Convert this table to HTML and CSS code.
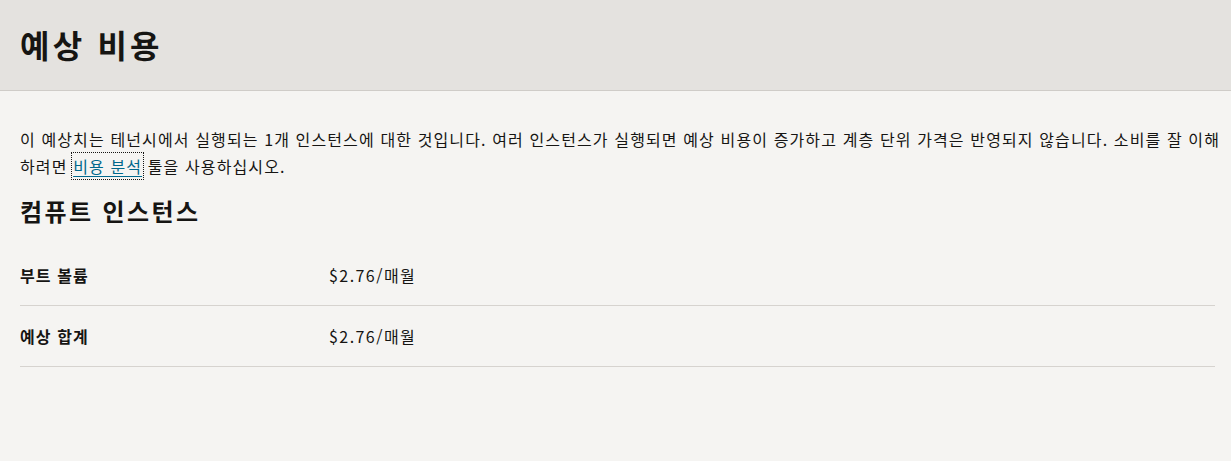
FILE: index.html
```html
<!DOCTYPE html>
<html lang="ko">
<head>
    <meta charset="UTF-8">
    <meta name="viewport" content="width=device-width, initial-scale=1.0">
    <title>예상 비용</title>
    <link rel="stylesheet" href="styles.css">
</head>
<body>
    <header class="page-header">
        <h1>예상 비용</h1>
    </header>

    <main class="content">
        <p class="intro">이 예상치는 테넌시에서 실행되는 1개 인스턴스에 대한 것입니다. 여러 인스턴스가 실행되면 예상 비용이 증가하고 계층 단위 가격은 반영되지 않습니다. 소비를 잘 이해하려면 <a href="#" class="link focused">비용 분석</a> 툴을 사용하십시오.</p>

        <h2>컴퓨트 인스턴스</h2>

        <div class="cost-list">
            <div class="cost-row">
                <span class="cost-label">부트 볼륨</span>
                <span class="cost-value">$2.76/매월</span>
            </div>
            <div class="cost-row">
                <span class="cost-label">예상 합계</span>
                <span class="cost-value">$2.76/매월</span>
            </div>
        </div>
    </main>
</body>
</html>
```

FILE: styles.css
```css
:root {
    --text: #161513;
    --header-bg: #e4e2df;
    --page-bg: #f5f4f2;
    --line: #d6d3cf;
    --link: #00688c;
}

body {
    margin: 0;
    padding: 0;
    background: var(--page-bg);
    color: var(--text);
    font-family: "Noto Sans CJK KR", "Noto Sans", sans-serif;
    font-size: 16px;
    letter-spacing: 0.07em;
}

.page-header {
    background: var(--header-bg);
    border-bottom: 1px solid #cfccc8;
    height: 90px;
    display: flex;
    align-items: center;
    padding: 0 20px;
}

.page-header h1 {
    margin: 0;
    font-size: 32px;
    font-weight: 700;
    line-height: 1;
    letter-spacing: 0.1em;
    padding-bottom: 2px;
}

.content {
    padding: 0 4px 0 20px;
}

.intro {
    margin: 35px 0 0;
    line-height: 27px;
    word-break: break-all;
}

.link {
    color: var(--link);
    text-decoration: underline;
    text-underline-offset: 3px;
}

.focused {
    outline: 1px dotted var(--text);
    outline-offset: 1px;
}

h2 {
    margin: 14px 0 0;
    font-size: 24px;
    font-weight: 700;
    line-height: 34px;
    letter-spacing: 0.1em;
}

.cost-list {
    margin: 17px 12px 0 0;
}

.cost-row {
    display: flex;
    align-items: center;
    height: 60px;
    border-bottom: 1px solid var(--line);
}

.cost-label {
    width: 309px;
    font-weight: 700;
}

.cost-value {
    font-size: 16px;
    letter-spacing: 0.09em;
}
```
